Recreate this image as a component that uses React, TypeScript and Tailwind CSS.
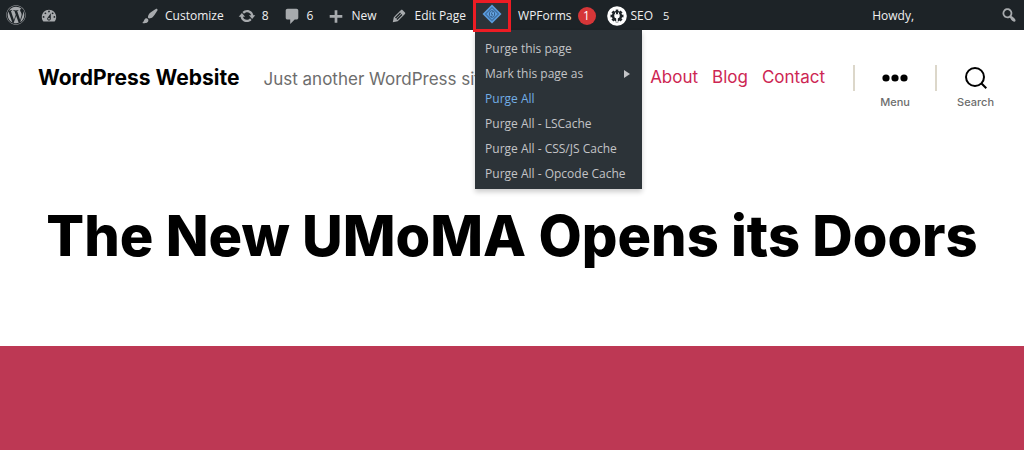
import type { ReactNode } from "react";
import { FaWordpress } from "react-icons/fa";

const ICONS = {
  dashboard:
    "M3.76 16h12.48c1.1-1.37 1.76-3.11 1.76-5 0-4.42-3.58-8-8-8s-8 3.58-8 8c0 1.89.66 3.63 1.76 5zM10 4c.55 0 1 .45 1 1s-.45 1-1 1-1-.45-1-1 .45-1 1-1zM6 6c.55 0 1 .45 1 1s-.45 1-1 1-1-.45-1-1 .45-1 1-1zm8 0c.55 0 1 .45 1 1s-.45 1-1 1-1-.45-1-1 .45-1 1-1zm-5.37 5.55L12 7v6c0 1.1-.9 2-2 2s-2-.9-2-2c0-.57.24-1.08.63-1.45zM4 10c.55 0 1 .45 1 1s-.45 1-1 1-1-.45-1-1 .45-1 1-1zm12 0c.55 0 1 .45 1 1s-.45 1-1 1-1-.45-1-1 .45-1 1-1zm-5 3c0-.55-.45-1-1-1s-1 .45-1 1 .45 1 1 1 1-.45 1-1z",
  brush:
    "M18.33 3.57s.27-.8-.31-1.36c-.53-.52-1.22-.24-1.22-.24-.61.3-5.76 3.47-7.67 5.57-.86.96-2.06 3.79-1.09 4.82.92.98 3.96-.17 4.79-1 2.06-2.06 5.21-7.17 5.5-7.79zM1.4 17.65c2.37-1.56 1.46-3.41 3.23-4.64.93-.65 2.22-.62 3.08.29.63.67.8 2.57-.16 3.46-1.57 1.45-4 1.55-6.15.89z",
  update:
    "M10.2 3.28c3.53 0 6.43 2.61 6.92 6h2.08l-3.5 4-3.5-4h2.32c-.45-1.97-2.21-3.45-4.32-3.45-1.45 0-2.73.71-3.54 1.78L4.95 5.66C6.23 4.2 8.11 3.28 10.2 3.28zm-.4 13.44c-3.52 0-6.43-2.61-6.92-6H.8l3.5-4c1.17 1.33 2.33 2.67 3.5 4H5.48c.45 1.97 2.21 3.45 4.32 3.45 1.45 0 2.73-.71 3.54-1.78l1.71 1.95c-1.28 1.46-3.15 2.38-5.25 2.38z",
  comment:
    "M5 2h10c1.1 0 2 .9 2 2v8c0 1.1-.9 2-2 2h-2l-5 5v-5H5c-1.1 0-2-.9-2-2V4c0-1.1.9-2 2-2z",
  plus: "M17 9v3h-5.500v5.500h-3V12H3V9h5.500V3.500h3V9z",
  edit: "M13.89 3.39l2.71 2.72c.46.46.42 1.24.03 1.64l-8.01 8.02-5.56 1.16 1.16-5.58s7.6-7.63 7.99-8.03c.39-.39 1.22-.39 1.68.07zm-2.73 2.79l-5.59 5.61 1.11 1.11 5.54-5.65zm-2.97 8.23l5.58-5.6-1.07-1.08-5.59 5.6z",
  search:
    "M12.14 4.18c1.87 1.87 2.11 4.75.72 6.89.12.1.22.21.36.31.2.16.47.36.81.59.34.24.56.39.66.47.42.31.73.57.94.78.32.32.6.65.84 1 .25.35.44.69.59 1.04.14.35.21.68.18 1-.02.32-.14.59-.36.81s-.49.34-.81.36c-.31.02-.65-.04-.99-.19-.35-.14-.7-.34-1.04-.59-.35-.24-.68-.52-1-.84-.21-.21-.47-.52-.77-.93-.1-.13-.25-.35-.47-.66-.22-.32-.4-.57-.56-.78-.16-.2-.29-.35-.44-.5-2.07 1.09-4.69.76-6.44-.98-2.14-2.15-2.14-5.64 0-7.78 2.15-2.15 5.63-2.15 7.78 0zm-1.41 6.36c1.36-1.37 1.36-3.58 0-4.95-1.37-1.37-3.59-1.37-4.95 0-1.37 1.37-1.37 3.58 0 4.95 1.36 1.37 3.58 1.37 4.95 0z",
};

const purgeItems = [
  { label: "Purge this page" },
  { label: "Mark this page as", submenu: true },
  { label: "Purge All", active: true },
  { label: "Purge All - LSCache" },
  { label: "Purge All - CSS/JS Cache" },
  { label: "Purge All - Opcode Cache" },
];

function Icon({ name }: { name: keyof typeof ICONS }) {
  return (
    <svg viewBox="0 0 20 20" className="size-[18px] shrink-0 fill-[#a7aaad]" aria-hidden="true">
      <path d={ICONS[name]} />
    </svg>
  );
}

function BarItem({ icon, children }: { icon?: keyof typeof ICONS; children?: ReactNode }) {
  return (
    <a href="#" className="flex h-full items-center gap-1.5 px-[7px] pt-0.5">
      {icon && <Icon name={icon} />}
      {children}
    </a>
  );
}

function LiteSpeedIcon() {
  return (
    <svg viewBox="0 0 20 20" className="size-5" aria-hidden="true">
      <path d="M10 .5 19.500 10 10 19.500.5 10z" fill="#5a9bdc" />
      <path d="M10 3.500 16.500 10 10 16.500 3.500 10z" fill="#5a9bdc" stroke="#2f5680" strokeWidth="1" />
      <ellipse cx="10" cy="10" rx="2.600" ry="3.400" fill="#6fb0ee" stroke="#2f5680" strokeWidth=".9" />
      <path d="M10.800 7.200 9 10.200h1.800L9.300 13" fill="none" stroke="#2f5680" strokeWidth=".8" />
    </svg>
  );
}

function SeoIcon() {
  return (
    <svg viewBox="0 0 20 20" className="size-5 shrink-0" aria-hidden="true">
      <circle cx="10" cy="10" r="9.800" fill="#fff" />
      <circle cx="10" cy="10" r="5.200" fill="#1d2327" />
      <circle
        cx="10"
        cy="10"
        r="5.600"
        fill="none"
        stroke="#1d2327"
        strokeWidth="1.800"
        pathLength="80"
        strokeDasharray="6 4"
        strokeDashoffset="3"
      />
      <path d="M8.500 6.500v2M11.500 6.500v2" stroke="#fff" strokeWidth="1.100" />
      <path d="M7.300 8.300h5.400v2c0 1.200-.8 1.900-1.900 2.100v3.800H9.200v-3.800c-1.100-.2-1.900-.9-1.900-2.100z" fill="#fff" />
    </svg>
  );
}

function PurgeMenu() {
  return (
    <ul className="absolute top-[30px] left-0.5 z-10 w-[167px] bg-[#2c3338] pt-1.5 pb-[3px] shadow-[0_3px_5px_rgba(0,0,0,0.2)]">
      {purgeItems.map((item) => (
        <li key={item.label}>
          <a
            href="#"
            className={`flex h-[25px] items-center justify-between pr-3 pl-2.5 whitespace-nowrap ${
              item.active ? "text-[#72aee6]" : "text-[#c3c4c7]"
            }`}
          >
            {item.label}
            {item.submenu && (
              <svg viewBox="0 0 6 8" className="h-2 w-1.5 fill-[#c3c4c7]" aria-hidden="true">
                <path d="M0 0l6 4-6 4z" />
              </svg>
            )}
          </a>
        </li>
      ))}
    </ul>
  );
}

function AdminBar() {
  return (
    <nav
      aria-label="Toolbar"
      className="flex h-[30px] items-center justify-between bg-[#1d2327] font-['Open_Sans',sans-serif] text-xs whitespace-nowrap text-[#f0f0f1]"
    >
      <div className="flex h-full items-center">
        <a href="#" aria-label="About WordPress" className="px-1.5">
          <FaWordpress className="size-5 text-[#a7aaad]" />
        </a>
        <div className="mr-[69px] ml-px h-full">
          <BarItem icon="dashboard" />
        </div>
        <BarItem icon="brush">Customize</BarItem>
        <BarItem icon="update">8</BarItem>
        <BarItem icon="comment">6</BarItem>
        <BarItem icon="plus">New</BarItem>
        <BarItem icon="edit">Edit Page</BarItem>
        <div className="relative h-full">
          <button
            type="button"
            aria-label="LiteSpeed Cache"
            className="relative z-20 flex h-8 w-[38px] items-center justify-center border-3 border-[#ed1c24] bg-[#2c3338] pb-1"
          >
            <LiteSpeedIcon />
          </button>
          <PurgeMenu />
        </div>
        <BarItem>
          WPForms
          <span className="flex size-[18px] items-center justify-center rounded-full bg-[#d63638] text-white">1</span>
        </BarItem>
        <a href="#" className="flex h-full items-center gap-1 px-1 pt-0.5">
          <SeoIcon />
          SEO
          <span className="pl-1.5 text-[11px]">5</span>
        </a>
      </div>
      <div className="flex h-full items-center">
        <a href="#" className="mr-20 pt-0.5">
          Howdy,
        </a>
        <button type="button" aria-label="Search site" className="px-1.5">
          <Icon name="search" />
        </button>
      </div>
    </nav>
  );
}

function SiteHeader() {
  return (
    <header className="flex h-24 items-center justify-between pr-[30px] pl-[38px]">
      <div className="flex items-baseline gap-6 whitespace-nowrap">
        <a href="#" className="text-[21px] font-bold text-black">
          WordPress Website
        </a>
        <p className="text-[17px] text-[#6d6d6d]">Just another WordPress site</p>
      </div>
      <div className="flex items-center">
        <nav aria-label="Main" className="flex gap-3.5 pr-7 text-[17px] text-[#cd2653]">
          <a href="#">About</a>
          <a href="#">Blog</a>
          <a href="#">Contact</a>
        </nav>
        <div className="h-[26px] w-0.5 bg-[#dcd7ca]" />
        <button type="button" className="flex w-20 flex-col items-center pt-5 text-[11px] leading-4 font-medium text-[#6d6d6d]">
          <svg viewBox="0 0 26 8" className="mb-1 h-6 w-[26px] fill-black" aria-hidden="true">
            <circle cx="4" cy="4" r="3.600" />
            <circle cx="13" cy="4" r="3.600" />
            <circle cx="22" cy="4" r="3.600" />
          </svg>
          Menu
        </button>
        <div className="h-[26px] w-0.5 bg-[#dcd7ca]" />
        <button type="button" className="flex flex-col items-center pt-5 pl-5 text-[11px] leading-4 font-medium text-[#6d6d6d]">
          <svg viewBox="0 0 24 24" className="mb-1 size-6 fill-none stroke-black stroke-2" aria-hidden="true">
            <circle cx="11" cy="11" r="9" />
            <path d="M17.500 17.500l4.800 4.800" />
          </svg>
          Search
        </button>
      </div>
    </header>
  );
}

export default function App() {
  return (
    <div className="flex min-h-screen flex-col bg-white font-['Inter',sans-serif]">
      <AdminBar />
      <SiteHeader />
      <main className="flex grow flex-col">
        <h1 className="px-6 pt-[74px] pb-[74px] text-center text-[56px] leading-[72px] font-extrabold whitespace-nowrap text-black">
          The New UMoMA Opens its Doors
        </h1>
        <div className="grow bg-[#bd3854]" />
      </main>
    </div>
  );
}
